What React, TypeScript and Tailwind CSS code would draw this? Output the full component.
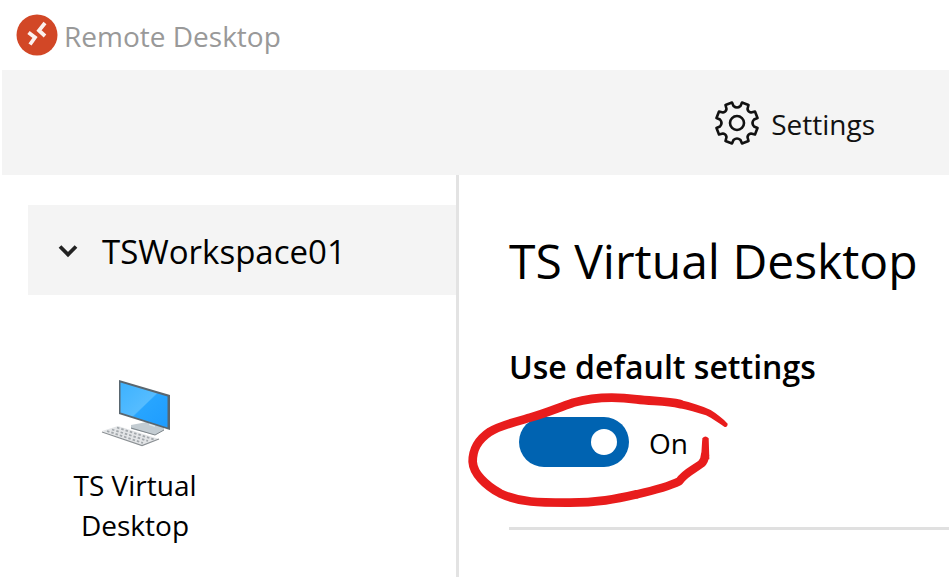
import { useState } from 'react';

function RemoteDesktopLogo() {
  return (
    <svg className="h-[42px] w-[42px] shrink-0" viewBox="0 0 42 42" aria-hidden="true">
      <circle cx="21" cy="21" r="20.5" fill="#d24726" />
      <g fill="none" stroke="#fff" strokeWidth="3.8" strokeLinejoin="miter" opacity="0.92">
        <path d="M12.500 18.500l6.500 5-5 7" />
        <path d="M29 9l-6 7.500 6 5.500" />
      </g>
    </svg>
  );
}

function GearIcon() {
  return (
    <svg
      className="h-11 w-11 shrink-0"
      viewBox="0 0 44 44"
      fill="none"
      stroke="#111"
      strokeWidth="2.600"
      strokeLinejoin="round"
      aria-hidden="true"
    >
      <path d="M17 1.500L18.500 5Q22 8 25.500 5L27 1.500L33.500 4L32.500 8Q33 11 36 11.500L40 10.500L42.500 17L39 18.500Q36 22 39 25.500L42.500 27L40 33.500L36 32.500Q33 33 32.500 36L33.500 40L27 42.500L25.500 39Q22 36 18.500 39L17 42.500L10.500 40L11.500 36Q11 33 8 32.500L4 33.500L1.500 27L5 25.500Q8 22 5 18.500L1.500 17L4 10.500L8 11.500Q11 11 11.500 8L10.500 4Z" />
      <circle cx="22" cy="22" r="7" />
    </svg>
  );
}

function ComputerIcon() {
  return (
    <svg className="h-[68px] w-[70px]" viewBox="0 0 70 68" aria-hidden="true">
      <defs>
        <linearGradient id="screen" x1="0" y1="0" x2="1" y2="1">
          <stop offset="0" stopColor="#3db2ff" />
          <stop offset="0.5" stopColor="#55bcff" />
          <stop offset="0.52" stopColor="#27a5ff" />
          <stop offset="1" stopColor="#1e9cff" />
        </linearGradient>
      </defs>
      <path d="M31 46l16-3 17 5v3l-9 5-24-6z" fill="#c3ccd2" />
      <path d="M31 49l24 7 9-5" fill="none" stroke="#7d858a" strokeWidth="1" />
      <path d="M49 40h6v8l-6-2z" fill="#dfe5e8" />
      <path d="M19 1l51 15v35L19 35z" fill="#59666f" />
      <path d="M20.500 3.500L67.500 17.500v31L20.500 33.500z" fill="url(#screen)" />
      <path d="M2 52l16-5 41 13-17 7z" fill="#e3e5e7" />
      <path d="M2 53l40 13.500 17-6.500" fill="none" stroke="#8b9094" strokeWidth="1.200" />
      <path
        d="M7 52l36 12M12 50.500l36 11.500M17 48.500l37 12"
        fill="none"
        stroke="#a3a8ac"
        strokeWidth="1.800"
        strokeDasharray="2.500 2"
      />
    </svg>
  );
}

function PenCircle() {
  return (
    <svg
      className="pointer-events-none absolute -left-[69px] -top-[37px] h-[140px] w-[300px]"
      viewBox="0 0 900 420"
      fill="none"
      stroke="#e81c1c"
      strokeLinecap="round"
      strokeLinejoin="round"
      aria-hidden="true"
    >
      <path
        d="M690 72C650 62 610 64 560 58C500 50 430 51 370 68C320 85 290 99 240 113C190 127 150 137 120 155C80 182 68 210 68 245C70 280 105 315 150 340C210 368 270 368 350 368C440 369 500 357 560 343"
        strokeWidth="26"
      />
      <path d="M560 343C610 332 660 318 688 304C705 278 735 267 754 251Q764 243 765 225" strokeWidth="25" />
      <path d="M753 238L757 175Q766 164 776 175L778 238Z" fill="#e81c1c" stroke="none" />
      <path
        d="M690 60C725 68 755 78 782 90C800 101 820 117 833 131Q833 141 824 141C805 128 787 116 768 106C740 98 715 89 686 84Z"
        fill="#e81c1c"
        stroke="none"
      />
    </svg>
  );
}

export default function App() {
  const [expanded, setExpanded] = useState(true);
  const [useDefaults, setUseDefaults] = useState(true);

  return (
    <div className="flex min-h-screen flex-col overflow-x-hidden bg-white pl-0.5 font-['Open_Sans','Noto_Sans',sans-serif] text-black">
      {/* Title bar */}
      <header className="flex h-[70px] items-center gap-1.5 px-3.5 text-[#999]">
        <RemoteDesktopLogo />
        <span className="pt-0.5 text-[28px] leading-10">Remote Desktop</span>
      </header>

      {/* Toolbar */}
      <nav className="flex h-[105px] items-center justify-end bg-[#f4f4f4] pr-[74px]">
        <button type="button" className="flex items-center gap-3 text-[28px] leading-10 text-[#111]">
          <GearIcon />
          <span className="pt-0.5">Settings</span>
        </button>
      </nav>

      <div className="flex flex-1">
        {/* Workspaces */}
        <aside className="w-[457px] shrink-0 border-r-[3px] border-[#e3e3e3] pl-[26px] pt-[30px]">
          <button
            type="button"
            aria-expanded={expanded}
            onClick={() => setExpanded(!expanded)}
            className="flex h-[90px] w-full items-center gap-6 bg-[#f4f4f4] pl-[30px] text-[33px] leading-10"
          >
            <svg className="h-5 w-5" viewBox="0 0 20 20" fill="none" stroke="#222" strokeWidth="3.800" aria-hidden="true">
              <path d="M2 6.500l8 8 8-8" />
            </svg>
            <span className="pt-1">TSWorkspace01</span>
          </button>
          {expanded && (
            <button type="button" className="mt-[84px] flex w-[214px] flex-col items-center text-[28px] leading-10">
              <ComputerIcon />
              <span className="mt-[18px] w-[140px]">TS Virtual Desktop</span>
            </button>
          )}
        </aside>

        {/* Connection settings */}
        <main className="min-w-0 flex-1 pl-[50px] pt-14">
          <h1 className="whitespace-nowrap text-[48px] leading-[60px]">TS Virtual Desktop</h1>
          <label htmlFor="default-settings" className="mt-14 block text-[32px] font-semibold leading-10">
            Use default settings
          </label>
          <div className="relative ml-2.5 mt-[30px] flex h-[50px] items-center gap-5">
            <input
              id="default-settings"
              type="checkbox"
              role="switch"
              checked={useDefaults}
              onChange={(e) => setUseDefaults(e.target.checked)}
              className="flex h-[50px] w-[110px] shrink-0 appearance-none items-center rounded-full bg-[#767676] px-3 before:h-[26px] before:w-[26px] before:rounded-full before:bg-white checked:justify-end checked:bg-[#0063b1]"
            />
            <span className="pt-0.5 text-[28px] leading-10">{useDefaults ? 'On' : 'Off'}</span>
            <PenCircle />
          </div>
          <hr className="mt-[60px] border-t-[3px] border-[#e0e0e0]" />
        </main>
      </div>
    </div>
  );
}
